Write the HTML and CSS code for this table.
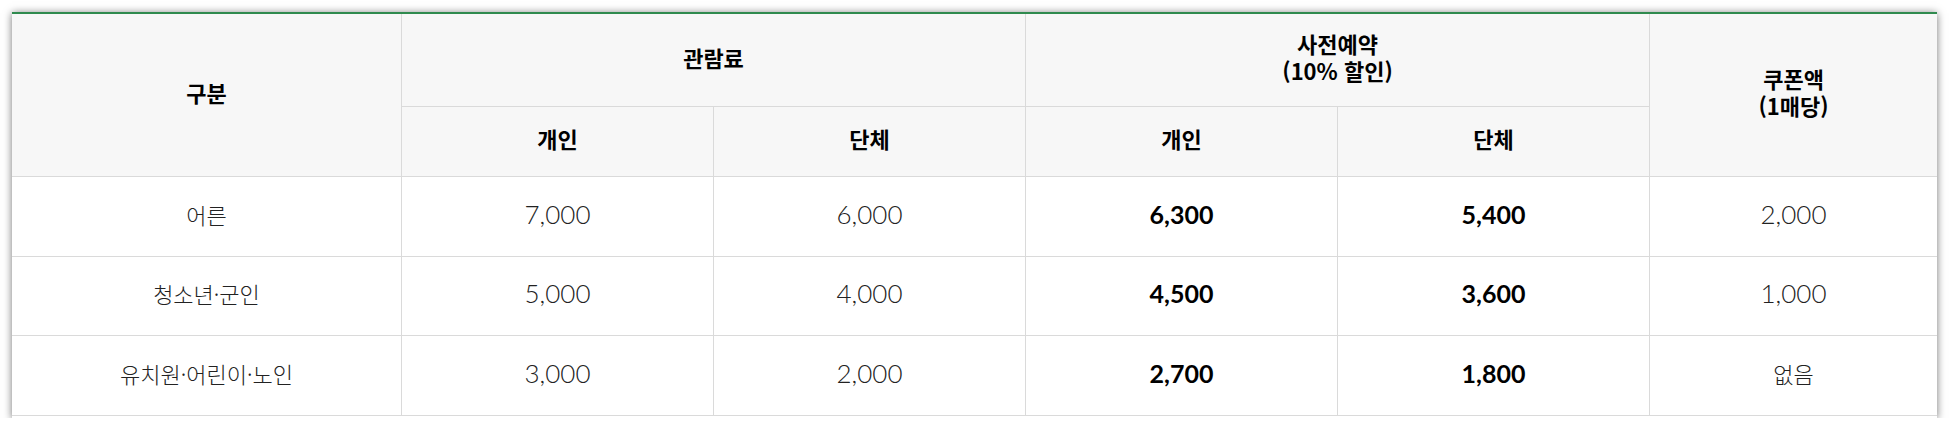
FILE: index.html
```
<!DOCTYPE html>
<html lang="ko">
<head>
    <meta charset="utf-8">
    <title>관람료 안내</title>
    <link rel="stylesheet" href="styles.css">
</head>
<body>
    <div class="price-box">
        <table class="price-table">
            <colgroup>
                <col class="col-kind">
                <col class="col-mid">
                <col class="col-mid">
                <col class="col-mid">
                <col class="col-mid">
                <col class="col-last">
            </colgroup>
            <thead>
                <tr class="head-top">
                    <th rowspan="2">구분</th>
                    <th colspan="2">관람료</th>
                    <th colspan="2">사전예약<br>(10% 할인)</th>
                    <th rowspan="2" class="last">쿠폰액<br>(1매당)</th>
                </tr>
                <tr class="head-sub">
                    <th>개인</th>
                    <th>단체</th>
                    <th>개인</th>
                    <th>단체</th>
                </tr>
            </thead>
            <tbody>
                <tr class="row-a">
                    <td class="kind">어른</td>
                    <td class="num">7,000</td>
                    <td class="num">6,000</td>
                    <td class="num strong">6,300</td>
                    <td class="num strong">5,400</td>
                    <td class="num last">2,000</td>
                </tr>
                <tr class="row-b">
                    <td class="kind">청소년·군인</td>
                    <td class="num">5,000</td>
                    <td class="num">4,000</td>
                    <td class="num strong">4,500</td>
                    <td class="num strong">3,600</td>
                    <td class="num last">1,000</td>
                </tr>
                <tr class="row-a">
                    <td class="kind">유치원·어린이·노인</td>
                    <td class="num">3,000</td>
                    <td class="num">2,000</td>
                    <td class="num strong">2,700</td>
                    <td class="num strong">1,800</td>
                    <td class="kind last">없음</td>
                </tr>
            </tbody>
        </table>
    </div>
</body>
</html>
```

FILE: styles.css
```
/* 관람료 표 */
body {
    margin: 0;
    padding: 12px 13px 0 12px;
    background: #fff;
    font-family: "Noto Sans CJK KR", "Noto Sans", sans-serif;
    color: #222;
}

.price-box {
    width: 1925px;
    border-top: 2px solid #2f8a4e;
    padding-bottom: 2px;
    background: #fff;
    box-shadow: 0 1px 8px rgba(0, 0, 0, 0.55);
}

.price-table {
    width: 100%;
    table-layout: fixed;
    border-collapse: separate;
    border-spacing: 0;
}

.col-kind { width: 390px; }
.col-mid { width: 312px; }
.col-last { width: 287px; }

.price-table th,
.price-table td {
    padding: 0 0 6px;
    text-align: center;
    vertical-align: middle;
    border-right: 1px solid #dadada;
    border-bottom: 1px solid #dadada;
}

.price-table .last {
    border-right: none;
}

.price-table th {
    background: #f7f7f7;
    color: #000;
    font-size: 22px;
    font-weight: 700;
    line-height: 27px;
}

.head-top { height: 93px; }
.head-sub { height: 70px; }
.row-a { height: 80px; }
.row-b { height: 79px; }

.kind {
    font-size: 22px;
    font-weight: 300;
    color: #222;
}

.num {
    font-family: Lato, "Noto Sans CJK KR", sans-serif;
    font-size: 26px;
    font-weight: 300;
    color: #222;
}

.num.strong {
    font-size: 25px;
    font-weight: 700;
    color: #000;
}
```
